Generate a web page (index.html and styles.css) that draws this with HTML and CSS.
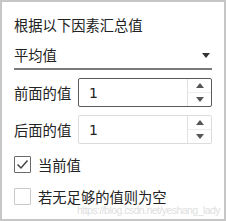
FILE: index.html
```html
<!DOCTYPE html>
<html>
<head>
<meta charset="utf-8">
<link rel="stylesheet" href="styles.css">
</head>
<body>
<div class="panel">
  <div class="title">根据以下因素汇总值</div>
  <div class="select">
    <span class="select-value">平均值</span>
    <svg class="caret" width="8" height="5" viewBox="0 0 8 5"><path d="M0 0H8L4 5Z" fill="#333"/></svg>
  </div>
  <div class="field-row">
    <span class="field-label">前面的值</span>
    <div class="spin spin-focus">
      <span class="spin-value">1</span>
      <div class="spin-buttons">
        <div class="spin-btn"><svg width="8" height="5" viewBox="0 0 8 5"><path d="M0 5H8L4 0Z" fill="#555"/></svg></div>
        <div class="spin-btn"><svg width="8" height="5" viewBox="0 0 8 5"><path d="M0 0H8L4 5Z" fill="#555"/></svg></div>
      </div>
    </div>
  </div>
  <div class="field-row">
    <span class="field-label">后面的值</span>
    <div class="spin">
      <span class="spin-value">1</span>
      <div class="spin-buttons">
        <div class="spin-btn"><svg width="8" height="5" viewBox="0 0 8 5"><path d="M0 5H8L4 0Z" fill="#555"/></svg></div>
        <div class="spin-btn"><svg width="8" height="5" viewBox="0 0 8 5"><path d="M0 0H8L4 5Z" fill="#555"/></svg></div>
      </div>
    </div>
  </div>
  <div class="check-row first">
    <span class="box box-checked"><svg width="13" height="11" viewBox="0 0 13 11"><path d="M1.5 5.5L5 9L11.5 1.5" fill="none" stroke="#444" stroke-width="1.5"/></svg></span>
    <span class="check-label">当前值</span>
  </div>
  <div class="check-row">
    <span class="box"></span>
    <span class="check-label">若无足够的值则为空</span>
  </div>
  <div class="watermark">https://blog.csdn.net/yeshang_lady</div>
</div>
</body>
</html>
```
FILE: styles.css
```css
html, body {
  margin: 0;
  padding: 0;
  background: #fff;
}
.panel {
  position: relative;
  box-sizing: border-box;
  width: 226px;
  height: 221px;
  border: 2px solid #c6c6c6;
  padding: 13px 12px 0 12px;
  font-family: "Noto Sans CJK SC", "Noto Sans", sans-serif;
  font-size: 14px;
  color: #222;
}
.title {
  height: 20px;
  line-height: 20px;
  font-size: 14.3px;
}
.select {
  margin-top: 9px;
  height: 24px;
  display: flex;
  align-items: center;
  justify-content: space-between;
  border-bottom: 2px solid #7a7a7a;
  padding: 0 1px 0 0;
  line-height: 20px;
  margin-bottom: 8px;
}
.select-value {
  font-size: 14.3px;
  margin-bottom: 2px;
}
.caret {
  margin-right: 1px;
  margin-bottom: 2px;
}
.field-row {
  display: flex;
  align-items: center;
  height: 29px;
  margin-bottom: 8px;
}
.field-label {
  width: 64px;
  font-size: 14.3px;
}
.spin {
  box-sizing: border-box;
  flex: 1;
  height: 100%;
  display: flex;
  border: 1px solid #dcdcdc;
  border-radius: 2px;
}
.spin-focus {
  border-color: #5a5a5a;
}
.spin-value {
  flex: 1;
  display: flex;
  align-items: center;
  padding-left: 10px;
  font-family: "DejaVu Sans", sans-serif;
  font-size: 14px;
  color: #222;
}
.spin-buttons {
  width: 23px;
  display: flex;
  flex-direction: column;
  border-left: 1px solid #e2e2e2;
}
.spin-btn {
  flex: 1;
  display: flex;
  align-items: center;
  justify-content: center;
}
.spin-btn + .spin-btn {
  border-top: 1px solid #ececec;
}
.check-row {
  display: flex;
  align-items: center;
  height: 17px;
  margin-top: 15px;
}
.check-row.first {
  margin-top: 12px;
}
.box {
  box-sizing: border-box;
  width: 17px;
  height: 17px;
  border: 1px solid #c8c8c8;
  border-radius: 1px;
  display: flex;
  align-items: center;
  justify-content: center;
}
.box-checked {
  border-color: #6a6a6a;
}
.check-label {
  margin-left: 7px;
  font-size: 14.3px;
  line-height: 17px;
}
.watermark {
  position: absolute;
  right: 4px;
  bottom: 3px;
  font-family: "Liberation Sans", Arial, sans-serif;
  font-size: 10.5px;
  line-height: 11px;
  letter-spacing: -0.55px;
  color: #dedede;
}
```
